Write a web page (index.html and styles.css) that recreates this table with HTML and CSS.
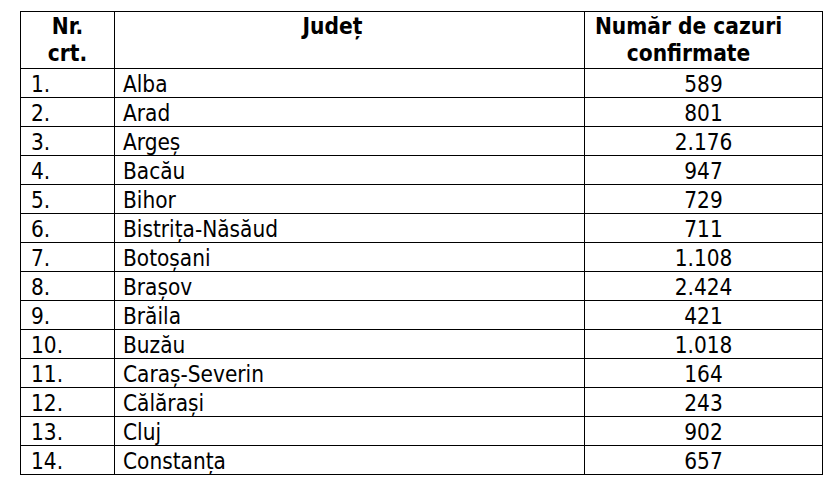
FILE: index.html
```html
<!DOCTYPE html>
<html lang="ro">
<head>
<meta charset="utf-8">
<link rel="stylesheet" href="styles.css">
</head>
<body>
<table class="cases">
  <colgroup>
    <col class="c-nr">
    <col class="c-jud">
    <col class="c-num">
  </colgroup>
  <thead>
    <tr class="head">
      <th>Nr.<br>crt.</th>
      <th class="h-jud">Județ</th>
      <th class="h-num">Număr de cazuri<br>confirmate</th>
    </tr>
  </thead>
  <tbody>
    <tr><td>1.</td><td>Alba</td><td class="num">589</td></tr>
    <tr><td>2.</td><td>Arad</td><td class="num">801</td></tr>
    <tr><td>3.</td><td>Argeș</td><td class="num">2.176</td></tr>
    <tr><td>4.</td><td>Bacău</td><td class="num">947</td></tr>
    <tr><td>5.</td><td>Bihor</td><td class="num">729</td></tr>
    <tr><td>6.</td><td>Bistrița-Năsăud</td><td class="num">711</td></tr>
    <tr><td>7.</td><td>Botoșani</td><td class="num">1.108</td></tr>
    <tr><td>8.</td><td>Brașov</td><td class="num">2.424</td></tr>
    <tr><td>9.</td><td>Brăila</td><td class="num">421</td></tr>
    <tr><td>10.</td><td>Buzău</td><td class="num">1.018</td></tr>
    <tr><td>11.</td><td>Caraș-Severin</td><td class="num">164</td></tr>
    <tr><td>12.</td><td>Călărași</td><td class="num">243</td></tr>
    <tr><td>13.</td><td>Cluj</td><td class="num">902</td></tr>
    <tr><td>14.</td><td>Constanța</td><td class="num">657</td></tr>
  </tbody>
</table>
</body>
</html>
```
FILE: styles.css
```css
html, body {
  margin: 0;
  background: #ffffff;
}
body {
  padding: 11px 0 0 20px;
  font-family: "DejaVu Sans Condensed", "DejaVu Sans", sans-serif;
  color: #000000;
}
.cases {
  border-collapse: collapse;
  table-layout: fixed;
  width: 802px;
}
.c-nr { width: 94px; }
.c-jud { width: 470px; }
.c-num { width: 238px; }
.cases th,
.cases td {
  border: 1px solid #000000;
  padding: 0 8px;
  vertical-align: top;
  text-align: left;
}
.cases th {
  font-weight: bold;
  font-size: 22.5px;
  line-height: 27px;
  text-align: center;
  padding-top: 1px;
}
.cases th.h-jud { padding-right: 42px; }
.cases th.h-num { padding-right: 38px; }
.head { height: 57px; }
.cases td {
  font-size: 22.4px;
  line-height: 26px;
  padding-top: 2px;
  height: 29px;
  box-sizing: border-box;
}
.cases td:first-child { padding-left: 10px; }
.cases td.num { text-align: center; }
```
